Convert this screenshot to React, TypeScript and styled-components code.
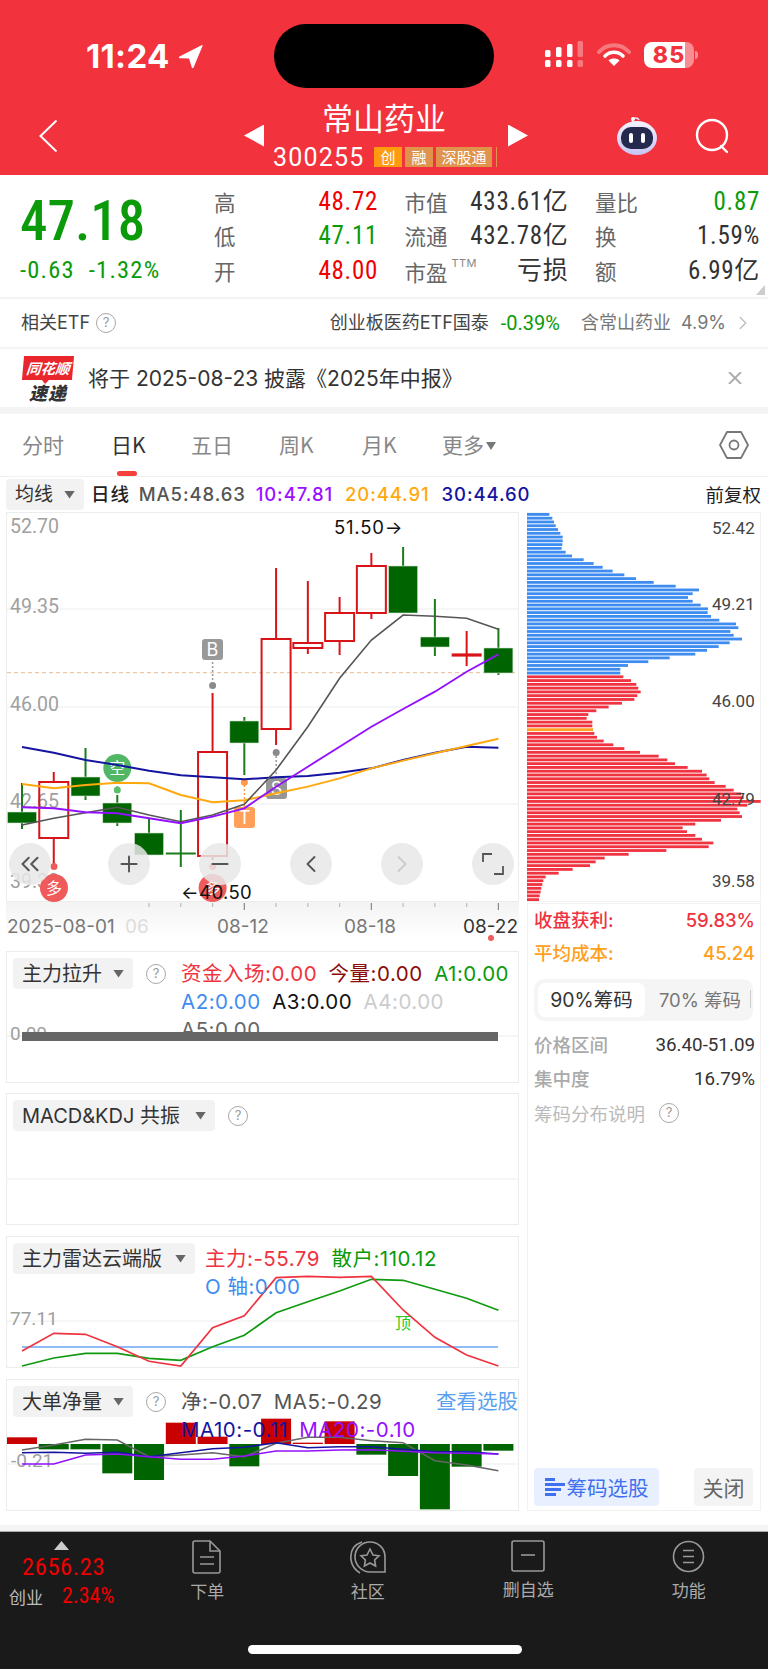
import React from 'react';
import { ChevronLeft, ChevronRight, ChevronsLeft, Minus, Plus } from 'lucide-react';
import styled, { createGlobalStyle } from 'styled-components';

const SANS = `Inter, "Noto Sans CJK SC", sans-serif`;
const NARROW = `Roboto, "Noto Sans CJK SC", sans-serif`;
const RED = '#f2323c';
const UP = '#f00000';
const DOWN = '#0a9a0a';

const GlobalStyle = createGlobalStyle`
  html, body { margin: 0; padding: 0; background: #fff; }
  body { font-family: ${SANS}; }
  * { box-sizing: border-box; }
`;

const Page = styled.div`
  width: 768px;
  height: 1669px;
  overflow: hidden;
  display: flex;
  flex-direction: column;
`;

const Header = styled.header`
  height: 175px;
  flex: none;
  background: ${RED};
  color: #fff;
`;

const StatusRow = styled.div`
  height: 96px;
  padding-top: 24px;
  display: grid;
  grid-template-columns: 274px 220px 274px;
`;

const StatusLeft = styled.div`
  height: 64px;
  padding-left: 86px;
  display: flex;
  align-items: center;
  gap: 8px;
`;

const Clock = styled.span`
  font: 700 33px/1 Inter, sans-serif;
  letter-spacing: 0.3px;
`;

const Island = styled.div`
  height: 64px;
  border-radius: 32px;
  background: #000;
`;

const StatusRight = styled.div`
  height: 64px;
  padding: 0 0 3px 51px;
  display: flex;
  align-items: center;
  gap: 13px;
`;

const Battery = styled.div`
  position: relative;
  width: 50px;
  height: 26px;
  border-radius: 8px;
  background: linear-gradient(90deg, #fff 41px, rgba(255, 255, 255, 0.45) 41px);
  color: ${RED};
  font: 800 23px/26px Inter, sans-serif;
  letter-spacing: 1px;
  text-align: center;
  &::after {
    content: '';
    position: absolute;
    right: -4px;
    top: 9px;
    width: 3px;
    height: 8px;
    border-radius: 0 3px 3px 0;
    background: rgba(255, 255, 255, 0.45);
  }
`;

const NavRow = styled.div`
  height: 79px;
  display: grid;
  grid-template-columns: 244px 284px 240px;
  align-items: center;
`;

const BackCell = styled.div`
  padding-left: 38px;
  display: flex;
`;

const NavCenter = styled.div`
  display: flex;
  align-items: center;
  justify-content: space-between;
`;

const Caret = styled.div<{ $flip?: boolean }>`
  width: 20px;
  height: 22px;
  background: #fff;
  clip-path: ${(p) => (p.$flip ? 'polygon(0 0, 100% 50%, 0 100%)' : 'polygon(100% 0, 0 50%, 100% 100%)')};
`;

const NavStack = styled.div`
  width: 244px;
  display: flex;
  flex-direction: column;
  gap: 5px;
`;

const StockName = styled.div`
  height: 38px;
  padding-right: 4px;
  font: 400 31px/38px "Noto Sans CJK SC", sans-serif;
  text-align: center;
`;

const CodeRow = styled.div`
  height: 32px;
  padding-left: 9px;
  display: flex;
  align-items: center;
`;

const StockCode = styled.span`
  width: 101px;
  font: 400 25px/1 Roboto, sans-serif;
  letter-spacing: 1.2px;
`;

const Tag = styled.span<{ $bg: string; $w: number }>`
  width: ${(p) => p.$w}px;
  height: 20px;
  margin-right: 3px;
  background: ${(p) => p.$bg};
  color: #fff;
  font: 400 15px/20px "Noto Sans CJK SC", sans-serif;
  text-align: center;
`;

const TagEdge = styled.span`
  width: 1px;
  height: 20px;
  margin-left: 1px;
  background: #e0934a;
`;

const NavIcons = styled.div`
  padding-left: 88px;
  display: flex;
  align-items: center;
  gap: 37px;
`;

const Quote = styled.section`
  position: relative;
  height: 122px;
  flex: none;
  display: flex;
`;

const PriceBox = styled.div`
  width: 214px;
  padding: 16px 0 0 20px;
`;

const BigPrice = styled.div`
  height: 66px;
  color: ${DOWN};
  font: 500 55px/60px ${NARROW};
  font-stretch: 75%;
`;

const ChangeRow = styled.div`
  display: flex;
  gap: 14px;
  color: ${DOWN};
  font: 400 24.5px/26px ${NARROW};
  font-stretch: 75%;
  letter-spacing: 1.2px;
`;

const StatGrid = styled.div`
  padding-top: 9px;
  display: grid;
  grid-template-columns: 164px 164px 165px;
  grid-auto-rows: 34.5px;
  column-gap: 26.5px;
`;

const Stat = styled.div`
  display: flex;
  justify-content: space-between;
  align-items: center;
`;

const StatLabel = styled.span`
  color: #666;
  font: 400 21.5px/1 "Noto Sans CJK SC", sans-serif;
`;

const StatValue = styled.span<{ $color?: string }>`
  color: ${(p) => p.$color || '#333'};
  font: 400 25px/1 ${NARROW};
  font-stretch: 75%;
  letter-spacing: 0.7px;
`;

const Ttm = styled.sup`
  margin-left: 4px;
  font: 400 11px/1 Inter, sans-serif;
  letter-spacing: 0.4px;
  color: #888;
  vertical-align: 14px;
`;

const CornerMark = styled.i`
  position: absolute;
  right: 3px;
  bottom: 2px;
  width: 9px;
  height: 10px;
  background: #ccc;
  clip-path: polygon(100% 0, 100% 100%, 0 100%);
`;

const Band = styled.div<{ $h: number }>`
  height: ${(p) => p.$h}px;
  flex: none;
  background: #f4f4f4;
`;

const EtfRow = styled.div`
  height: 48px;
  flex: none;
  padding: 0 14px 0 21px;
  display: flex;
  align-items: center;
  gap: 6px;
  font: 400 18px/1 ${SANS};
  color: #444;
`;

const EtfName = styled.span`
  margin-left: auto;
`;

const EtfChange = styled.span`
  margin: 0 15px 0 6px;
  color: ${DOWN};
  font: 400 20px/1 ${NARROW};
`;

const EtfHolding = styled.span`
  color: #777;
`;

const HelpCircle = styled.span`
  width: 20px;
  height: 20px;
  flex: none;
  display: inline-block;
  border-radius: 50%;
  border: 1.5px solid #a8a8a8;
  color: #999;
  font: 400 13px/17px Inter, sans-serif;
  text-align: center;
`;

const HelpMark = () => <HelpCircle>?</HelpCircle>;

const NewsRow = styled.div`
  height: 58px;
  flex: none;
  padding: 0 26px 0 23px;
  display: flex;
  align-items: center;
`;

const Logo = styled.div`
  width: 50px;
  flex: none;
  display: flex;
  flex-direction: column;
  align-items: center;
`;

const LogoFlag = styled.div`
  position: relative;
  width: 50px;
  height: 24px;
  background: #e9262c;
  color: #fff;
  font: italic 700 14.5px/24px "Noto Sans CJK SC", sans-serif;
  text-align: center;
  transform: skewX(-5deg);
  &::after {
    content: '';
    position: absolute;
    left: 20px;
    bottom: -4px;
    width: 7px;
    height: 4px;
    background: #e9262c;
    clip-path: polygon(0 0, 100% 0, 50% 100%);
  }
`;

const LogoText = styled.div`
  height: 18px;
  margin-top: 3px;
  color: #333;
  font: italic 900 18px/18px "Noto Sans CJK SC", sans-serif;
  letter-spacing: 1px;
`;

const NewsText = styled.div`
  margin-left: 15px;
  flex: 1;
  color: #333;
  font: 400 21px/1 ${SANS};
`;

const Tabs = styled.nav`
  height: 63px;
  flex: none;
  padding: 0 19px 1px 22px;
  display: flex;
  align-items: center;
  border-bottom: 1.5px solid #f0f0f0;
`;

const TabItem = styled.div<{ $w: number; $active?: boolean }>`
  position: relative;
  width: ${(p) => p.$w}px;
  color: ${(p) => (p.$active ? '#333' : '#888')};
  font: 400 21px/1 "Noto Sans CJK SC", sans-serif;
  ${(p) =>
    p.$active &&
    `&::after {
      content: '';
      position: absolute;
      left: 6px;
      top: 37px;
      width: 20px;
      height: 5px;
      border-radius: 3px;
      background: #f5403c;
    }`}
`;

const MoreCaret = styled.i`
  display: inline-block;
  width: 10px;
  height: 8px;
  margin-left: 2px;
  vertical-align: 3px;
  background: #777;
  clip-path: polygon(0 0, 100% 0, 50% 100%);
`;

const TabGear = styled.div`
  margin-left: auto;
  display: flex;
`;

const MaRow = styled.div`
  height: 35px;
  flex: none;
  padding: 1px 7px 1px 6px;
  display: flex;
  align-items: center;
`;

const Picker = styled.div<{ $w: number; $fs?: number }>`
  width: ${(p) => p.$w}px;
  height: 31px;
  flex: none;
  padding-left: 9px;
  padding-right: 9px;
  display: flex;
  align-items: center;
  justify-content: space-between;
  border-radius: 4px;
  background: #f2f2f2;
  color: #333;
  font: 400 ${(p) => p.$fs || 20}px/1 ${SANS};
`;

const PickerCaret = styled.i`
  width: 11px;
  height: 8px;
  flex: none;
  background: #666;
  clip-path: polygon(0 0, 100% 0, 50% 100%);
`;

const MaItem = styled.span<{ $color: string; $gap: number }>`
  margin-left: ${(p) => p.$gap}px;
  color: ${(p) => p.$color};
  font: 500 18.5px/1 ${SANS};
  letter-spacing: 0.9px;
`;

const Adjust = styled.span`
  margin-left: auto;
  color: #222;
  font: 400 18.5px/1 "Noto Sans CJK SC", sans-serif;
`;

const Workspace = styled.main`
  flex: none;
  padding-left: 6px;
  display: flex;
  gap: 8px;
`;

const LeftColumn = styled.div`
  width: 513px;
  display: flex;
  flex-direction: column;
`;

const ChartBox = styled.div`
  position: relative;
  height: 390px;
  border: 1.5px solid #ececec;
`;

const Drawing = styled.svg`
  position: absolute;
  left: -1.5px;
  top: -1.5px;
  font-family: ${SANS};
`;

const ControlRow = styled.div`
  position: absolute;
  left: 2px;
  top: 330px;
  display: flex;
  gap: 49px;
  & > *:first-child {
    margin-right: 8px;
  }
`;

const ControlButton = styled.div<{ $muted?: boolean }>`
  width: 42px;
  height: 42px;
  display: flex;
  align-items: center;
  justify-content: center;
  border-radius: 50%;
  background: rgba(232, 232, 232, 0.85);
  color: ${(p) => (p.$muted ? '#ccc' : '#555')};
`;

const AxisStrip = styled.svg`
  display: block;
  height: 49px;
  font-family: ${SANS};
  background: linear-gradient(#f3f3f3, #fff 75%);
`;

const Panel = styled.section<{ $mt?: number }>`
  position: relative;
  height: 132px;
  flex: none;
  margin-top: ${(p) => p.$mt || 0}px;
  padding: 6px 0 0 6px;
  display: flex;
  align-items: flex-start;
  border: 1.5px solid #ececec;
`;

const PanelDrawing = styled(Drawing)<{ $front?: boolean }>`
  z-index: ${(p) => (p.$front ? 2 : 0)};
`;

const PanelHead = styled.div`
  position: relative;
  flex: none;
  display: flex;
  align-items: center;
  gap: 13px;
  z-index: 1;
`;

const Legend = styled.div<{ $w: number; $ml: number }>`
  position: relative;
  width: ${(p) => p.$w}px;
  margin: 2px 0 0 ${(p) => p.$ml}px;
  display: flex;
  flex-wrap: wrap;
  column-gap: 11.5px;
  z-index: 1;
`;

const LegendItem = styled.span<{ $color: string }>`
  color: ${(p) => p.$color};
  font: 400 20.5px/28px ${SANS};
  letter-spacing: 0.5px;
  white-space: nowrap;
`;

const SelectLink = styled.span`
  position: absolute;
  right: 0;
  top: 10px;
  color: #5aa0f0;
  font: 400 20.5px/1 "Noto Sans CJK SC", sans-serif;
  z-index: 1;
`;

const RightColumn = styled.div`
  width: 234px;
  display: flex;
  flex-direction: column;
`;

const ProfileBox = styled.div`
  position: relative;
  height: 390px;
  border: 1.5px solid #f2f2f2;
`;

const InfoBox = styled.div`
  height: 608px;
  margin-top: 1px;
  padding: 0 5px 4px 6px;
  display: flex;
  flex-direction: column;
  border: 1.5px solid #f2f2f2;
`;

const InfoRow = styled.div<{ $color?: string; $h?: number }>`
  height: ${(p) => p.$h || 33}px;
  flex: none;
  display: flex;
  align-items: center;
  justify-content: space-between;
  color: ${(p) => p.$color || '#aaa'};
  font: 500 18.5px/1 ${SANS};
`;

const InfoValue = styled.span`
  color: #333;
  font: 400 18.8px/1 Roboto, sans-serif;
`;

const InfoHint = styled.div`
  height: 33px;
  display: flex;
  align-items: center;
  gap: 14px;
  color: #bbb;
  font: 400 18.5px/1 "Noto Sans CJK SC", sans-serif;
`;

const Segmented = styled.div`
  position: relative;
  height: 42px;
  margin: 8.5px 2px 8px 0;
  padding: 4px;
  display: flex;
  align-items: center;
  border-radius: 10px;
  background: #f5f5f5;
  &::after {
    content: '';
    position: absolute;
    right: 2px;
    top: 11px;
    width: 1px;
    height: 18px;
    background: #ccc;
  }
`;

const Segment = styled.div<{ $active?: boolean }>`
  width: ${(p) => (p.$active ? 107 : 100)}px;
  height: 34px;
  padding-left: ${(p) => (p.$active ? 0 : 10)}px;
  border-radius: 7px;
  background: ${(p) => (p.$active ? '#fff' : 'transparent')};
  color: ${(p) => (p.$active ? '#333' : '#777')};
  font: 400 ${(p) => (p.$active ? 19.5 : 18.5)}px/34px ${SANS};
  text-align: center;
`;

const InfoActions = styled.div`
  margin-top: auto;
  padding-right: 2px;
  display: flex;
  justify-content: space-between;
`;

const ChipSelect = styled.div`
  width: 125px;
  height: 38px;
  display: flex;
  align-items: center;
  justify-content: center;
  gap: 2px;
  border-radius: 4px;
  background: #e8f0ff;
  color: #3f70f0;
  font: 400 20.5px/1 "Noto Sans CJK SC", sans-serif;
`;

const CloseButton = styled.div`
  width: 59px;
  height: 38px;
  border-radius: 4px;
  background: #f4f4f4;
  color: #666;
  font: 400 21px/38px "Noto Sans CJK SC", sans-serif;
  text-align: center;
`;

const PageGap = styled.div`
  height: 14px;
  flex: none;
`;

const TabBar = styled.footer`
  position: relative;
  flex: 1;
  display: flex;
  align-items: flex-start;
  border-top: 1.5px solid #aaa;
  background: #1a1a1a;
`;

const IndexBlock = styled.div`
  position: relative;
  width: 127px;
  flex: none;
  padding: 24px 0 0 9px;
`;

const IndexArrow = styled.i`
  display: block;
  width: 15px;
  height: 9px;
  margin: -15px 0 7px 45px;
  background: #ccc;
  clip-path: polygon(50% 0, 100% 100%, 0 100%);
`;

const IndexValue = styled.div`
  padding-left: 13px;
  color: ${UP};
  font: 400 24.5px/19px ${NARROW};
  font-stretch: 75%;
  letter-spacing: 0.6px;
`;

const IndexMeta = styled.div`
  margin-top: 9px;
  display: flex;
  align-items: center;
  gap: 19px;
  color: #bbb;
  font: 400 17px/1 "Noto Sans CJK SC", sans-serif;
`;

const IndexPct = styled.span`
  color: ${UP};
  font: 400 22px/1 ${NARROW};
  font-stretch: 75%;
`;

const BarTab = styled.div`
  width: 160.5px;
  flex: none;
  padding-top: 8px;
  display: flex;
  flex-direction: column;
  align-items: center;
  gap: 6px;
  color: #aaa;
  font: 400 17px/22px "Noto Sans CJK SC", sans-serif;
`;

const HomeBar = styled.div`
  position: absolute;
  left: 248px;
  top: 113px;
  width: 274px;
  height: 9px;
  border-radius: 5px;
  background: #fff;
`;

// chart data below is read off the screen in page coordinates
const X = (i: number) => 22 + i * 31.76;
const line = (ys: number[]) => ys.map((y, i) => `${X(i).toFixed(1)},${y.toFixed(1)}`).join(' ');
const zoomY = (base: number) => (zs: number[]) => zs.map((z) => base + z / 3);

type Candle = { up: boolean; hi: number; lo: number; top: number; bot: number };

const candles: Candle[] = [
  { up: false, hi: 783, lo: 829, top: 812, bot: 823 },
  { up: true, hi: 772, lo: 867, top: 782, bot: 838 },
  { up: false, hi: 748, lo: 800, top: 777, bot: 796 },
  { up: false, hi: 795, lo: 826, top: 803, bot: 823 },
  { up: false, hi: 819, lo: 855, top: 833, bot: 855 },
  { up: false, hi: 810, lo: 867, top: 852, bot: 855 },
  { up: true, hi: 693, lo: 860, top: 752, bot: 856 },
  { up: false, hi: 717, lo: 775, top: 721, bot: 743 },
  { up: true, hi: 568, lo: 745, top: 639, bot: 729 },
  { up: true, hi: 581, lo: 654, top: 643, bot: 648 },
  { up: true, hi: 597, lo: 655, top: 613, bot: 641 },
  { up: true, hi: 553, lo: 619, top: 566, bot: 613 },
  { up: false, hi: 547, lo: 613, top: 566, bot: 613 },
  { up: false, hi: 599, lo: 656, top: 637, bot: 647 },
  { up: true, hi: 631, lo: 666, top: 653, bot: 657 },
  { up: false, hi: 628, lo: 675, top: 648, bot: 673 },
];

const kLine = zoomY(500);
const ma5 = kLine([975, 955, 938, 922, 945, 965, 945, 913, 810, 680, 535, 420, 345, 349, 355, 388]);
const ma10 = kLine([922, 925, 937, 940, 955, 970, 950, 925, 860, 800, 740, 680, 627, 575, 515, 463]);
const ma20 = kLine([852, 865, 855, 848, 850, 885, 907, 901, 880, 860, 835, 805, 782, 760, 738, 716]);
const ma30 = kLine([741, 758, 780, 795, 812, 826, 832, 838, 832, 828, 818, 805, 780, 758, 740, 743]);

const radarY = zoomY(1230);
const radarMain = radarY([363, 310, 313, 350, 394, 408, 293, 257, 143, 139, 142, 139, 240, 322, 375, 408]);
const radarRetail = radarY([408, 384, 370, 370, 385, 391, 350, 316, 248, 215, 183, 148, 151, 178, 205, 241]);

const netBars = [622, 658, 658, 730, 750, 578, 620, 709, 566, 638, 574, 674, 738, 838, 710, 662];
const netGrey = radarY([660, 645, 628, 630, 680, 675, 668, 680, 640, 622, 622, 632, 638, 692, 705, 722]);
const netNavy = radarY([668, 667, 670, 667, 680, 668, 656, 652, 638, 653, 650, 650, 658, 665, 665, 672]);
const netPurple = radarY([702, 702, 675, 672, 680, 688, 688, 678, 663, 663, 660, 659, 664, 668, 670, 672]);

const askRows = [
  88, 97, 102, 107, 114, 121, 128, 128, 127, 125, 137, 156, 191, 221, 248, 278, 313, 348, 401, 467, 537, 518, 504, 518,
  542, 564, 563, 573, 598, 648, 655, 631, 641, 666, 629, 596, 561, 526, 449, 385, 324, 301, 301,
];
const bidRows = [
  310, 333, 349, 355, 362, 352, 343, 306, 266, 229, 205, 200, 217, 217, 219, 223, 231, 251, 280, 313, 360, 416, 442,
  465, 503, 546, 560, 568, 584, 617, 641, 663, 671, 722, 682, 652, 659, 666, 603, 526, 488, 501, 526, 546, 580, 566,
  439, 326, 254, 227, 210, 158, 116, 77, 70, 67, 64, 62, 59, 57,
];

function Candles() {
  return (
    <>
      {candles.map((c, i) => {
        const color = c.up ? '#d81418' : '#1b7a1b';
        const cx = X(i);
        if (c.bot - c.top < 5 && i !== 9) {
          return (
            <g key={i}>
              <line x1={cx} x2={cx} y1={c.hi} y2={c.lo} stroke={color} strokeWidth={2} />
              <line x1={cx - 15} x2={cx + 15} y1={(c.top + c.bot) / 2} y2={(c.top + c.bot) / 2} stroke={color} strokeWidth={c.up ? 3.2 : 2} />
            </g>
          );
        }
        return (
          <g key={i}>
            <line x1={cx} x2={cx} y1={c.hi} y2={c.top} stroke={color} strokeWidth={2} />
            <line x1={cx} x2={cx} y1={c.bot} y2={c.lo} stroke={color} strokeWidth={2} />
            <rect
              x={cx - 14.5}
              y={c.top}
              width={29}
              height={c.bot - c.top}
              fill={c.up ? 'none' : '#006400'}
              stroke={c.up ? '#d81418' : '#cfe3cf'}
              strokeWidth={c.up ? 2 : 0.6}
            />
          </g>
        );
      })}
    </>
  );
}

function Flag({ x, y, color, label }: { x: number; y: number; color: string; label: string }) {
  return (
    <g>
      <rect x={x} y={y} width={21} height={21} rx={3} fill={color} />
      <text x={x + 10.5} y={y + 17} fontSize={18} fill="#fff" textAnchor="middle">
        {label}
      </text>
    </g>
  );
}

function Coin({ x, y, color, label }: { x: number; y: number; color: string; label: string }) {
  return (
    <g>
      <circle cx={x} cy={y} r={14} fill={color} />
      <text x={x} y={y + 6} fontSize={16} fill="#fff" textAnchor="middle" fontFamily='"Noto Sans CJK SC", sans-serif'>
        {label}
      </text>
    </g>
  );
}

function KChart() {
  return (
    <Drawing width={513} height={390} viewBox="6 512 513 390">
      {[609, 707, 804].map((y) => (
        <line key={y} x1={7} x2={518} y1={y} y2={y} stroke="#eeeeee" strokeWidth={1.2} />
      ))}
      {[
        ['52.70', 533],
        ['49.35', 613],
        ['46.00', 711],
        ['42.65', 808],
        ['39.30', 888],
      ].map(([v, y]) => (
        <text key={v} x={10} y={y} fontSize={19.5} fill="#a0a0a0" fontFamily="Roboto, sans-serif">
          {v}
        </text>
      ))}
      <line x1={7} x2={518} y1={672.7} y2={672.7} stroke="#e8bc94" strokeWidth={1} strokeDasharray="4 3" />
      <Candles />
      <line x1={212.6} x2={212.6} y1={662} y2={682} stroke="#999" strokeWidth={1.5} strokeDasharray="2 2" />
      <circle cx={212.6} cy={685.5} r={3.5} fill="#8a8a8a" />
      <Flag x={202} y={639} color="#999" label="B" />
      <line x1={117.3} x2={117.3} y1={782} y2={790} stroke="#5cbe6c" strokeWidth={1.5} strokeDasharray="2 2" />
      <circle cx={117.3} cy={790} r={3.5} fill="#5cbe6c" />
      <Coin x={117.3} y={768} color="#52b765" label="空" />
      <line x1={276.2} x2={276.2} y1={756} y2={778} stroke="#999" strokeWidth={1.5} strokeDasharray="2 2" />
      <circle cx={276.2} cy={752.6} r={3.5} fill="#8a8a8a" />
      <Flag x={266} y={778} color="#969696" label="S" />
      <line x1={244.4} x2={244.4} y1={785} y2={807} stroke="#ff9a4a" strokeWidth={1.5} strokeDasharray="2 2" />
      <circle cx={244.4} cy={782.3} r={3.5} fill="#ff9a4a" />
      <Flag x={234} y={807} color="#ffa05a" label="T" />
      <circle cx={54} cy={866.5} r={3.5} fill="#f05a5a" />
      <Coin x={54} y={888} color="#ef5a5a" label="多" />
      <circle cx={212.6} cy={866.5} r={3.5} fill="#f05a5a" />
      <Coin x={212.6} y={888} color="#ef5a5a" label="多" />
      <polyline points={line(ma30)} fill="none" stroke="#1414a0" strokeWidth={1.9} />
      <polyline points={line(ma20)} fill="none" stroke="#ffa90f" strokeWidth={1.9} />
      <polyline points={line(ma5)} fill="none" stroke="#555" strokeWidth={1.6} />
      <polyline points={line(ma10)} fill="none" stroke="#9310ff" strokeWidth={1.9} />
      <text x={334} y={534} fontSize={18.5} letterSpacing={0.8} fill="#111" fontFamily="Inter, sans-serif">
        51.50→
      </text>
      <text x={181} y={899} fontSize={18.5} letterSpacing={0.4} fill="#111" fontFamily="Inter, sans-serif">
        ←40.50
      </text>
    </Drawing>
  );
}

function DateAxis() {
  return (
    <AxisStrip width={513} viewBox="6 902 513 49">
      {candles.slice(4).map((_, i) => {
        const major = [7, 11, 15].includes(i + 4);
        return (
          <line
            key={i}
            x1={X(i + 4)}
            x2={X(i + 4)}
            y1={903}
            y2={major ? 910 : 907}
            stroke={major ? '#888' : '#bbb'}
            strokeWidth={1.2}
          />
        );
      })}
      <text x={7} y={933} fontSize={19} fill="#777">
        2025-08-01
      </text>
      <text x={125} y={933} fontSize={19} fill="#ddd">
        06
      </text>
      <text x={217} y={933} fontSize={19} fill="#777">
        08-12
      </text>
      <text x={344} y={933} fontSize={19} fill="#777">
        08-18
      </text>
      <text x={463} y={933} fontSize={19} fill="#333">
        08-22
      </text>
      <circle cx={491} cy={938} r={3} fill="#f05a5a" />
    </AxisStrip>
  );
}

function Profile() {
  const rows = [...askRows.map((z) => ({ z, c: '#3f8cf0' })), ...bidRows.map((z, i) => ({ z, c: i === 14 ? '#ffa020' : '#ef3340' }))];
  const step = 389 / rows.length;
  return (
    <Drawing width={234} height={390} viewBox="527 512 234 390">
      {rows.map((r, i) => (
        <rect key={i} x={527} y={513 + i * step} width={(r.z - 21) / 3} height={2.8} fill={r.c} />
      ))}
      {[
        ['52.42', 534],
        ['49.21', 610],
        ['46.00', 707],
        ['42.79', 805],
        ['39.58', 887],
      ].map(([v, y]) => (
        <text key={v} x={712} y={y} fontSize={17} fill="#444" fontFamily="Roboto, sans-serif">
          {v}
        </text>
      ))}
    </Drawing>
  );
}

function HoldGlyph() {
  return (
    <svg width={20} height={20} viewBox="0 0 20 20" fill="#3f70f0">
      <rect x={0} y={1} width={10} height={3} />
      <rect x={0} y={6} width={20} height={3} />
      <rect x={0} y={11} width={16} height={3} />
      <rect x={0} y={16} width={11} height={3} />
    </svg>
  );
}

function RobotIcon() {
  return (
    <svg width={42} height={40} viewBox="0 0 42 40">
      <defs>
        <linearGradient id="robotShell" x1="0" y1="0" x2="0" y2="1">
          <stop offset="0" stopColor="#f4f3ff" />
          <stop offset="1" stopColor="#c8c4f4" />
        </linearGradient>
      </defs>
      <path d="M17 7 Q15 2 20 2 Q22 2 23 4" fill="none" stroke="#e8e4ff" strokeWidth={1.6} />
      <circle cx={17} cy={3} r={2} fill="#fff" />
      <ellipse cx={21} cy={22} rx={20} ry={17} fill="url(#robotShell)" />
      <rect x={5} y={11} width={32} height={22} rx={10} fill="#232a4d" />
      <rect x={13} y={17} width={4} height={10} rx={2} fill="#fff" />
      <rect x={25} y={17} width={4} height={10} rx={2} fill="#fff" />
    </svg>
  );
}

function DocIcon() {
  return (
    <svg width={32} height={34} viewBox="0 0 32 34" fill="none" stroke="#999" strokeWidth={1.6}>
      <path d="M4 1h15l10 10v20a2 2 0 0 1-2 2H4a2 2 0 0 1-2-2V3a2 2 0 0 1 2-2Z" />
      <path d="M19 1v10h10" />
      <path d="M9 17h14M9 24h14" />
    </svg>
  );
}

function CommunityIcon() {
  return (
    <svg width={38} height={34} viewBox="0 0 38 34" fill="none" stroke="#999" strokeWidth={1.6}>
      <path d="M13 2C4 5 1 12 2 20c1 6 4 10 9 13" />
      <path d="M21 2c8 0 15 6 15 15v15H21C13 32 6 25 6 17 6 8 13 2 21 2Z" />
      <path d="M21 9l3 6 6 .8-4.4 4.2 1 6-5.6-3-5.6 3 1-6-4.4-4.2 6-.8Z" />
    </svg>
  );
}

function MinusDocIcon() {
  return (
    <svg width={34} height={32} viewBox="0 0 34 32" fill="none" stroke="#999" strokeWidth={1.6}>
      <rect x={1} y={1} width={32} height={30} rx={2} />
      <path d="M10 15h14" />
    </svg>
  );
}

function MenuIcon() {
  return (
    <svg width={33} height={33} viewBox="0 0 33 33" fill="none" stroke="#999" strokeWidth={1.6}>
      <circle cx={16.5} cy={16.5} r={15} />
      <path d="M11 10.5h11M11 16.5h11M11 22.5h11" />
    </svg>
  );
}

export default function App() {
  return (
    <Page>
      <GlobalStyle />
      <Header>
        <StatusRow>
          <StatusLeft>
            <Clock>11:24</Clock>
            <svg width={25} height={25} viewBox="0 0 25 25" fill="#fff">
              <path d="M24 1 1.5 12.5c-1 .6-.7 1.7.4 1.7L11 14.5l2.8 9c.3 1 1.4 1.1 1.8.1L24.5 2c.3-.8-.2-1.3-.5-1Z" />
            </svg>
          </StatusLeft>
          <Island />
          <StatusRight>
            <svg width={39} height={28} viewBox="0 0 39 28" fill="#fff">
              <rect x={0} y={9} width={5.5} height={7} rx={1.5} />
              <rect x={11} y={6} width={5.5} height={10} rx={1.5} />
              <rect x={22} y={3} width={5.5} height={13} rx={1.5} />
              <rect x={32.5} y={0} width={5.5} height={16} rx={1.5} opacity={0.35} />
              <rect x={0} y={19} width={5.5} height={7} rx={1.5} />
              <rect x={11} y={19} width={5.5} height={7} rx={1.5} />
              <rect x={22} y={19} width={5.5} height={7} rx={1.5} />
              <rect x={32.5} y={19} width={5.5} height={7} rx={1.5} opacity={0.35} />
            </svg>
            <svg width={34} height={24} viewBox="0 0 34 24" fill="none" stroke="#fff" strokeLinecap="round">
              <path d="M2 9C10 0 24 0 32 9" strokeWidth={4} opacity={0.35} />
              <path d="M8 13c5-5 13-5 18 0" strokeWidth={3.6} />
              <path d="M17 23 11.5 17.5c3-2.6 8-2.6 11 0Z" fill="#fff" stroke="none" />
            </svg>
            <Battery>85</Battery>
          </StatusRight>
        </StatusRow>
        <NavRow>
          <BackCell>
            <svg width={20} height={34} viewBox="0 0 20 34" fill="none" stroke="#fff" strokeWidth={2}>
              <path d="M18.5 1.5 2.5 17l16 15.5" />
            </svg>
          </BackCell>
          <NavCenter>
            <Caret />
            <NavStack>
              <StockName>常山药业</StockName>
              <CodeRow>
                <StockCode>300255</StockCode>
                <Tag $bg="#ff9b0f" $w={28}>
                  创
                </Tag>
                <Tag $bg="#e0934a" $w={28}>
                  融
                </Tag>
                <Tag $bg="#e0934a" $w={56}>
                  深股通
                </Tag>
                <TagEdge />
              </CodeRow>
            </NavStack>
            <Caret $flip />
          </NavCenter>
          <NavIcons>
            <RobotIcon />
            <svg width={36} height={36} viewBox="0 0 36 36" fill="none" stroke="#fff" strokeWidth={2.4}>
              <circle cx={17} cy={17} r={15} />
              <path d="M26 28l6 6" strokeLinecap="round" />
            </svg>
          </NavIcons>
        </NavRow>
      </Header>

      <Quote>
        <PriceBox>
          <BigPrice>47.18</BigPrice>
          <ChangeRow>
            <span>-0.63</span>
            <span>-1.32%</span>
          </ChangeRow>
        </PriceBox>
        <StatGrid>
          <Stat>
            <StatLabel>高</StatLabel>
            <StatValue $color={UP}>48.72</StatValue>
          </Stat>
          <Stat>
            <StatLabel>市值</StatLabel>
            <StatValue>433.61亿</StatValue>
          </Stat>
          <Stat>
            <StatLabel>量比</StatLabel>
            <StatValue $color={DOWN}>0.87</StatValue>
          </Stat>
          <Stat>
            <StatLabel>低</StatLabel>
            <StatValue $color={DOWN}>47.11</StatValue>
          </Stat>
          <Stat>
            <StatLabel>流通</StatLabel>
            <StatValue>432.78亿</StatValue>
          </Stat>
          <Stat>
            <StatLabel>换</StatLabel>
            <StatValue>1.59%</StatValue>
          </Stat>
          <Stat>
            <StatLabel>开</StatLabel>
            <StatValue $color={UP}>48.00</StatValue>
          </Stat>
          <Stat>
            <StatLabel>
              市盈<Ttm>TTM</Ttm>
            </StatLabel>
            <StatValue>亏损</StatValue>
          </Stat>
          <Stat>
            <StatLabel>额</StatLabel>
            <StatValue>6.99亿</StatValue>
          </Stat>
        </StatGrid>
        <CornerMark />
      </Quote>
      <Band $h={2} />
      <EtfRow>
        相关ETF
        <HelpMark />
        <EtfName>创业板医药ETF国泰</EtfName>
        <EtfChange>-0.39%</EtfChange>
        <EtfHolding>含常山药业&nbsp;&nbsp;4.9%</EtfHolding>
        <ChevronRight size={22} color="#bbb" strokeWidth={1.4} />
      </EtfRow>
      <Band $h={2} />
      <NewsRow>
        <Logo>
          <LogoFlag>同花顺</LogoFlag>
          <LogoText>速递</LogoText>
        </Logo>
        <NewsText>将于 2025-08-23 披露《2025年中报》</NewsText>
        <svg width={14} height={12} viewBox="0 0 14 12" stroke="#aaa" strokeWidth={1.8}>
          <path d="M1 0l12 12M13 0 1 12" />
        </svg>
      </NewsRow>
      <Band $h={7} />
      <Tabs>
        <TabItem $w={89}>分时</TabItem>
        <TabItem $w={80} $active>
          日K
        </TabItem>
        <TabItem $w={88}>五日</TabItem>
        <TabItem $w={83}>周K</TabItem>
        <TabItem $w={80}>月K</TabItem>
        <TabItem $w={60}>
          更多
          <MoreCaret />
        </TabItem>
        <TabGear>
          <svg width={30} height={28} viewBox="0 0 30 28" fill="none" stroke="#777" strokeWidth={1.8}>
            <path d="M8 1h14l7 13-7 13H8L1 14Z" strokeLinejoin="round" />
            <circle cx={15} cy={14} r={4.5} />
          </svg>
        </TabGear>
      </Tabs>
      <MaRow>
        <Picker $w={78} $fs={19}>
          均线
          <PickerCaret />
        </Picker>
        <MaItem $color="#222" $gap={7}>
          日线
        </MaItem>
        <MaItem $color="#555" $gap={9}>
          MA5:48.63
        </MaItem>
        <MaItem $color="#9a10ff" $gap={10}>
          10:47.81
        </MaItem>
        <MaItem $color="#ffa90f" $gap={12}>
          20:44.91
        </MaItem>
        <MaItem $color="#1414a0" $gap={12}>
          30:44.60
        </MaItem>
        <Adjust>前复权</Adjust>
      </MaRow>

      <Workspace>
        <LeftColumn>
          <ChartBox>
            <KChart />
            <ControlRow>
              <ControlButton>
                <ChevronsLeft size={30} strokeWidth={1.6} />
              </ControlButton>
              <ControlButton>
                <Plus size={26} strokeWidth={1.8} />
              </ControlButton>
              <ControlButton>
                <Minus size={26} strokeWidth={1.8} />
              </ControlButton>
              <ControlButton>
                <ChevronLeft size={28} strokeWidth={1.6} />
              </ControlButton>
              <ControlButton $muted>
                <ChevronRight size={28} strokeWidth={1.6} />
              </ControlButton>
              <ControlButton>
                <svg width={22} height={22} viewBox="0 0 22 22" fill="none" stroke="#555" strokeWidth={1.8}>
                  <path d="M10 1H1v8M12 21h9v-8" />
                </svg>
              </ControlButton>
            </ControlRow>
          </ChartBox>
          <DateAxis />

          <Panel>
            <PanelHead>
              <Picker $w={120}>
                主力拉升
                <PickerCaret />
              </Picker>
              <HelpMark />
            </PanelHead>
            <Legend $w={335} $ml={15}>
              <LegendItem $color="#ef3340">资金入场:0.00</LegendItem>
              <LegendItem $color="#8b0a0a">今量:0.00</LegendItem>
              <LegendItem $color={DOWN}>A1:0.00</LegendItem>
              <LegendItem $color="#3f8cf0">A2:0.00</LegendItem>
              <LegendItem $color="#111">A3:0.00</LegendItem>
              <LegendItem $color="#ccc">A4:0.00</LegendItem>
              <LegendItem $color="#666">A5:0.00</LegendItem>
            </Legend>
            <PanelDrawing $front width={513} height={132} viewBox="6 951 513 132">
              <line x1={7} x2={518} y1={1036} y2={1036} stroke="#eee" strokeWidth={1.2} />
              <text x={10} y={1040} fontSize={19} fill="#a0a0a0" fontFamily="Roboto, sans-serif">
                0.00
              </text>
              <rect x={22} y={1032} width={476} height={9} fill="#666" />
            </PanelDrawing>
          </Panel>

          <Panel $mt={10}>
            <PanelHead>
              <Picker $w={202}>
                MACD&KDJ 共振
                <PickerCaret />
              </Picker>
              <HelpMark />
            </PanelHead>
            <PanelDrawing width={513} height={132} viewBox="6 1093 513 132">
              <line x1={7} x2={518} y1={1179} y2={1179} stroke="#eee" strokeWidth={1.2} />
            </PanelDrawing>
          </Panel>

          <Panel $mt={11}>
            <PanelHead>
              <Picker $w={182}>
                主力雷达云端版
                <PickerCaret />
              </Picker>
            </PanelHead>
            <Legend $w={280} $ml={10}>
              <LegendItem $color="#ef3340">主力:-55.79</LegendItem>
              <LegendItem $color={DOWN}>散户:110.12</LegendItem>
              <LegendItem $color="#3f8cf0">O 轴:0.00</LegendItem>
            </Legend>
            <PanelDrawing width={513} height={132} viewBox="6 1236 513 132">
              <line x1={7} x2={518} y1={1321} y2={1321} stroke="#eee" strokeWidth={1.2} />
              <text x={10} y={1325} fontSize={19} fill="#a0a0a0" fontFamily="Roboto, sans-serif">
                77.11
              </text>
              <line x1={22} x2={498} y1={1347} y2={1347} stroke="#6aa6f5" strokeWidth={1.7} />
              <polyline points={line(radarRetail)} fill="none" stroke="#0f9a0f" strokeWidth={1.7} />
              <polyline points={line(radarMain)} fill="none" stroke="#ef3340" strokeWidth={1.7} />
              <text x={395} y={1329} fontSize={16} fill="#22cc22" fontFamily='"Noto Sans CJK SC", sans-serif'>
                顶
              </text>
            </PanelDrawing>
          </Panel>

          <Panel $mt={11}>
            <PanelHead>
              <Picker $w={120}>
                大单净量
                <PickerCaret />
              </Picker>
              <HelpMark />
            </PanelHead>
            <Legend $w={245} $ml={15}>
              <LegendItem $color="#555">净:-0.07</LegendItem>
              <LegendItem $color="#555">MA5:-0.29</LegendItem>
              <LegendItem $color="#1414a0">MA10:-0.11</LegendItem>
              <LegendItem $color="#9310ff">MA20:-0.10</LegendItem>
            </Legend>
            <SelectLink>查看选股</SelectLink>
            <PanelDrawing width={513} height={132} viewBox="6 1379 513 132">
              <line x1={7} x2={518} y1={1464} y2={1464} stroke="#eee" strokeWidth={1.2} />
              <text x={11} y={1467} fontSize={19} fill="#a0a0a0" fontFamily="Roboto, sans-serif">
                -0.21
              </text>
              {netBars.map((z, i) => {
                const y = 1230 + z / 3;
                const zero = 1444;
                return (
                  <rect
                    key={i}
                    x={X(i) - 15}
                    y={Math.min(y, zero)}
                    width={30}
                    height={Math.abs(y - zero)}
                    fill={y < zero ? '#c80000' : '#006400'}
                  />
                );
              })}
              <polyline points={line(netGrey)} fill="none" stroke="#666" strokeWidth={1.5} />
              <polyline points={line(netNavy)} fill="none" stroke="#1414a0" strokeWidth={1.6} />
              <polyline points={line(netPurple)} fill="none" stroke="#9310ff" strokeWidth={1.6} />
            </PanelDrawing>
          </Panel>
        </LeftColumn>

        <RightColumn>
          <ProfileBox>
            <Profile />
          </ProfileBox>
          <InfoBox>
            <InfoRow $color="#ef3340">
              <span>收盘获利:</span>
              <span>59.83%</span>
            </InfoRow>
            <InfoRow $color="#ffa020">
              <span>平均成本:</span>
              <span>45.24</span>
            </InfoRow>
            <Segmented>
              <Segment $active>90%筹码</Segment>
              <Segment>70% 筹码</Segment>
            </Segmented>
            <InfoRow $h={34}>
              <span>价格区间</span>
              <InfoValue>36.40-51.09</InfoValue>
            </InfoRow>
            <InfoRow $h={34}>
              <span>集中度</span>
              <InfoValue>16.79%</InfoValue>
            </InfoRow>
            <InfoHint>
              筹码分布说明
              <HelpMark />
            </InfoHint>
            <InfoActions>
              <ChipSelect>
                <HoldGlyph />
                筹码选股
              </ChipSelect>
              <CloseButton>关闭</CloseButton>
            </InfoActions>
          </InfoBox>
        </RightColumn>
      </Workspace>

      <PageGap />
      <Band $h={6} />
      <TabBar>
        <IndexBlock>
          <IndexArrow />
          <IndexValue>2656.23</IndexValue>
          <IndexMeta>
            创业
            <IndexPct>2.34%</IndexPct>
          </IndexMeta>
        </IndexBlock>
        <BarTab>
          <DocIcon />
          下单
        </BarTab>
        <BarTab>
          <CommunityIcon />
          社区
        </BarTab>
        <BarTab>
          <MinusDocIcon />
          删自选
        </BarTab>
        <BarTab>
          <MenuIcon />
          功能
        </BarTab>
        <HomeBar />
      </TabBar>
    </Page>
  );
}
